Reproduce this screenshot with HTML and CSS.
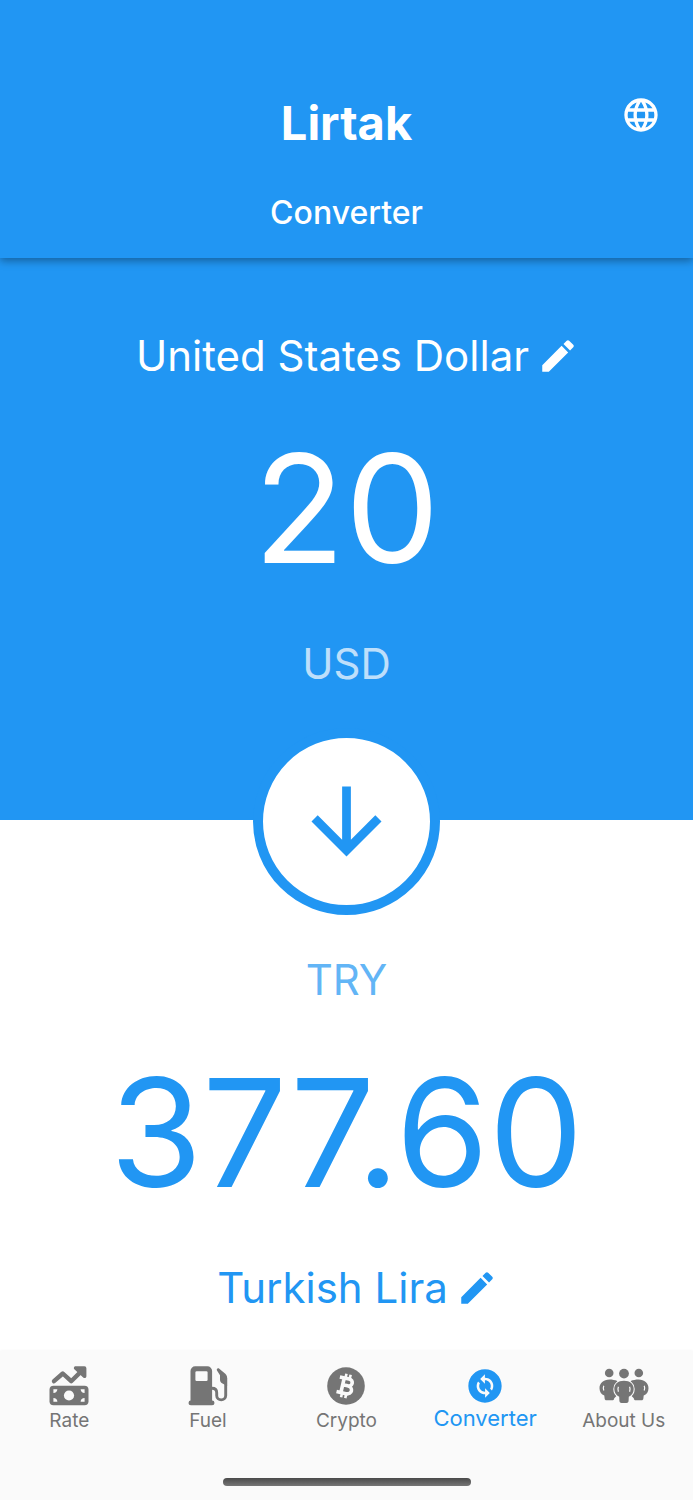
FILE: index.html
```html
<!DOCTYPE html>
<html lang="en">
  <head>
    <meta charset="UTF-8" />
    <meta name="viewport" content="width=device-width, initial-scale=1.0" />
    <title>Lirtak</title>
    <link rel="stylesheet" href="styles.css">
  </head>
  <body>
    <header class="app-bar">
      <h1>Lirtak</h1>
      <button class="language" type="button" aria-label="Language">
        <svg viewBox="0 0 24 24"><path d="M11.99 2C6.47 2 2 6.48 2 12s4.47 10 9.99 10C17.52 22 22 17.52 22 12S17.52 2 11.99 2zm6.93 6h-2.95c-.32-1.25-.78-2.45-1.38-3.56 1.84.63 3.37 1.91 4.33 3.56zM12 4.04c.83 1.2 1.48 2.53 1.91 3.96h-3.82c.43-1.43 1.08-2.76 1.91-3.96zM4.26 14C4.1 13.36 4 12.69 4 12s.1-1.36.26-2h3.38c-.08.66-.14 1.32-.14 2 0 .68.06 1.34.14 2H4.26zm.82 2h2.95c.32 1.25.78 2.45 1.38 3.56-1.84-.63-3.37-1.9-4.33-3.56zm2.95-8H5.08c.96-1.66 2.49-2.93 4.33-3.56C8.81 5.55 8.35 6.75 8.03 8zM12 19.96c-.83-1.2-1.48-2.53-1.91-3.96h3.82c-.43 1.43-1.08 2.76-1.91 3.96zM14.34 14H9.66c-.09-.66-.16-1.32-.16-2 0-.68.07-1.35.16-2h4.68c.09.65.16 1.32.16 2 0 .68-.07 1.34-.16 2zm.25 5.56c.6-1.11 1.06-2.31 1.38-3.56h2.95c-.96 1.65-2.49 2.93-4.33 3.56zM16.36 14c.08-.66.14-1.32.14-2 0-.68-.06-1.34-.14-2h3.38c.16.64.26 1.31.26 2s-.1 1.36-.26 2h-3.38z"/></svg>
      </button>
      <h2>Converter</h2>
    </header>

    <main>
      <section class="panel from">
        <button class="currency" type="button">
          <span>United States Dollar</span>
          <svg viewBox="0 0 24 24"><path d="M3 17.25V21h3.75L17.81 9.94l-3.75-3.75L3 17.25zM20.71 7.04c.39-.39.39-1.02 0-1.41l-2.34-2.34c-.39-.39-1.02-.39-1.41 0l-1.83 1.83 3.75 3.75 1.83-1.83z"/></svg>
        </button>
        <input class="amount" id="amount" type="text" inputmode="decimal" value="20" />
        <label class="code" for="amount">USD</label>
      </section>

      <section class="panel to">
        <button class="swap" type="button" aria-label="Swap currencies">
          <svg viewBox="0 0 24 24"><path d="M20 12l-1.41-1.41L13 16.17V4h-2v12.17l-5.58-5.59L4 12l8 8 8-8z"/></svg>
        </button>
        <label class="code" for="result">TRY</label>
        <output class="amount" id="result">377.60</output>
        <button class="currency" type="button">
          <span>Turkish Lira</span>
          <svg viewBox="0 0 24 24"><path d="M3 17.25V21h3.75L17.81 9.94l-3.75-3.75L3 17.25zM20.71 7.04c.39-.39.39-1.02 0-1.41l-2.34-2.34c-.39-.39-1.02-.39-1.41 0l-1.83 1.83 3.75 3.75 1.83-1.83z"/></svg>
        </button>
      </section>
    </main>

    <footer>
      <nav class="tabs">
        <a class="tab" href="#rate">
          <svg viewBox="0 0 40 40">
            <path class="line" d="M5 15.2l8.8-7.7 8.4 7.7L33 4.6" stroke-width="4.4"/>
            <path d="M26.6.3h8.8a2 2 0 0 1 2 2V10c0 2.2-2 2.6-3.2 1.4L25.6 3.6C24.2 2.2 25 .3 26.6.3z"/>
            <rect x=".5" y="19.7" width="39" height="19.6" rx="4"/>
            <circle class="hole" cx="20" cy="29.5" r="5.1"/>
            <path class="hole" d="M4.4 23.3h4a4 4 0 0 1-4 3.6zM35.6 23.3h-4a4 4 0 0 0 4 3.6zM4.4 35.7h4a4 4 0 0 0-4-3.6zM35.6 35.7h-4a4 4 0 0 1 4-3.6z"/>
          </svg>
          <span>Rate</span>
        </a>
        <a class="tab" href="#fuel">
          <svg viewBox="0 0 40 40">
            <path d="M2.5 35V5A4.7 4.7 0 0 1 7.2.3h12.2A4.7 4.7 0 0 1 24.1 5v30z"/>
            <rect x=".5" y="34.5" width="26" height="4.8" rx="2.4"/>
            <rect class="hole" x="7.4" y="5.2" width="12.2" height="9.8" rx="1.2"/>
            <path class="line" d="M24 22.3c3 0 4.7 1.5 4.7 4.5v2.7c0 5.8 9 5.8 9 0V12" stroke-width="2.9"/>
            <path d="M29.3 4.9c-1.5-1.5.3-3.5 2-2.2l6 5c1.3 1.3 1.8 2.3 1.8 4.3v8l-4.6-2.5c-2-1.1-2.5-2.1-2.5-4V9.2z"/>
          </svg>
          <span>Fuel</span>
        </a>
        <a class="tab" href="#crypto">
          <svg viewBox="0 0 40 40">
            <circle cx="20" cy="20" r="18.8"/>
            <g class="coin" transform="rotate(13 20 20)">
              <path d="M12 12.5h9.5c5.2 0 5.2 7 0 7h-4.5M21.5 19.5c6.5 0 6.5 8 0 8H12M16.5 12.5v15" stroke-width="3.6"/>
              <path d="M17.7 8v4M22 8v4M17.7 28v4M22 28v4" stroke-width="2.6"/>
            </g>
          </svg>
          <span>Crypto</span>
        </a>
        <a class="tab active" href="#converter" aria-current="page">
          <svg viewBox="0 0 24 24"><path d="M12 2C6.48 2 2 6.48 2 12s4.48 10 10 10 10-4.48 10-10S17.52 2 12 2zm.06 17v-2.01H12c-1.28 0-2.56-.49-3.54-1.46-1.71-1.71-1.92-4.35-.64-6.29l1.1 1.1c-.71 1.33-.53 3.01.59 4.13.7.7 1.62 1.03 2.54 1.01v-2.14l2.83 2.83L12.06 19zm4.11-4.24l-1.1-1.1c.71-1.33.53-3.01-.59-4.13C13.79 8.84 12.9 8.5 12 8.5h-.06v2.15L9.11 7.83 11.94 5v2.02c1.3-.02 2.61.45 3.6 1.45 1.7 1.7 1.91 4.35.63 6.29z"/></svg>
          <span>Converter</span>
        </a>
        <a class="tab" href="#about">
          <svg class="wide" viewBox="0 0 50 40">
            <circle cx="10.2" cy="7" r="4.3"/>
            <circle cx="39.8" cy="7" r="4.3"/>
            <circle cx="25" cy="7.6" r="4.9"/>
            <path id="side" d="M10.5 13.5c-6 0-10 3.5-10 8.7 0 3.700 2 6.200 4.800 7.400l.3 2.600c.1 1.400.8 2 2 2h5.600c1.200 0 1.900-.6 2-2l3-3V15c-2-1-5-1.500-7.700-1.500z"/>
            <use href="#side" transform="matrix(-1 0 0 1 50 0)"/>
            <path class="front" d="M25 14.800c-6 0-9.700 3.400-9.700 8.200 0 3.700 2 6.500 4.900 7.700l.2 4.100c.1 1.500.9 2.200 2.200 2.200h4.800c1.300 0 2.100-.7 2.200-2.200l.2-4.100c2.900-1.200 4.900-4 4.900-7.700 0-4.800-3.700-8.200-9.700-8.200z"/>
            <path class="slit" d="M19.400 20.800q-1 2.500 0 5M30.600 20.800q1 2.500 0 5M4.800 19.800q-1 2.300 0 4.600M45.200 19.800q1 2.300 0 4.600"/>
          </svg>
          <span>About Us</span>
        </a>
      </nav>
      <div class="home-indicator"></div>
    </footer>
  </body>
</html>
```

FILE: styles.css
```css
* {
  box-sizing: border-box;
}
body {
  margin: 0;
  min-height: 100vh;
  display: flex;
  flex-direction: column;
  font-family: Inter, "Liberation Sans", sans-serif;
  background-color: #fff;
}
button,
input {
  font: inherit;
  color: inherit;
  background: none;
  border: 0;
  padding: 0;
  cursor: pointer;
}
svg {
  display: block;
  fill: currentColor;
}

.app-bar {
  position: relative;
  display: grid;
  grid-template-columns: 40px 1fr 40px;
  row-gap: 42px;
  padding: 95px 32px 25px;
  color: #fff;
  background-color: #2196f3;
  box-shadow: 0 3px 8px rgba(0, 0, 0, 0.35);
  text-align: center;
}
.app-bar h1 {
  grid-column: 2;
  margin: 0;
  font-size: 47px;
  line-height: 55px;
  font-weight: 700;
}
.app-bar h2 {
  grid-column: 2;
  margin: 0;
  font-size: 32px;
  line-height: 41px;
  font-weight: 500;
}
.language,
.language svg {
  width: 40px;
  height: 40px;
}

main {
  flex: 1;
}
.panel {
  display: flex;
  flex-direction: column;
  align-items: center;
}
.from {
  padding: 72px 24px 130px;
  color: #fff;
  background-color: #2196f3;
}
.to {
  padding: 0 24px 35px;
  color: #2196f3;
}
.currency {
  display: flex;
  align-items: center;
  gap: 8px;
  padding-left: 22px;
  font-size: 42px;
  line-height: 52px;
}
.currency svg {
  width: 42px;
  height: 42px;
}
.amount {
  width: 100%;
  height: 180px;
  margin: 37px 0 39px;
  font-size: 150px;
  line-height: 180px;
  text-align: center;
}
.code {
  font-size: 42px;
  line-height: 52px;
  opacity: 0.7;
}
.swap {
  display: grid;
  place-items: center;
  width: 187px;
  height: 187px;
  margin: -92px 0 39px;
  border: 10px solid #2196f3;
  border-radius: 50%;
  background-color: #fff;
}
.swap svg {
  width: 105px;
  height: 105px;
}

footer {
  padding: 15px 0 14px;
  background-color: #fafafa;
  box-shadow: 0 0 3px rgba(0, 0, 0, 0.06);
}
.tabs {
  display: grid;
  grid-template-columns: repeat(5, 1fr);
  height: 112px;
}
.tab {
  display: flex;
  flex-direction: column;
  align-items: center;
  color: #757575;
  text-decoration: none;
  font-size: 19px;
  line-height: 28px;
}
.tab span {
  margin-top: 1px;
}
.tab svg {
  width: 40px;
  height: 40px;
}
.tab svg.wide {
  width: 50px;
}
.tab.active {
  color: #2196f3;
  font-size: 22px;
  line-height: 22px;
}
.tab .hole {
  fill: #fafafa;
}
.tab .line {
  fill: none;
  stroke: currentColor;
  stroke-linecap: round;
  stroke-linejoin: round;
}
.tab .coin {
  fill: none;
  stroke: #fafafa;
}
.tab .front {
  stroke: #fafafa;
  stroke-width: 2;
  paint-order: stroke;
}
.tab .slit {
  fill: none;
  stroke: #fafafa;
  stroke-width: 1.2;
}
.home-indicator {
  width: 248px;
  height: 8px;
  margin: 0 auto;
  border-radius: 4px;
  background: linear-gradient(#4a4a4a, #757575);
}
```
